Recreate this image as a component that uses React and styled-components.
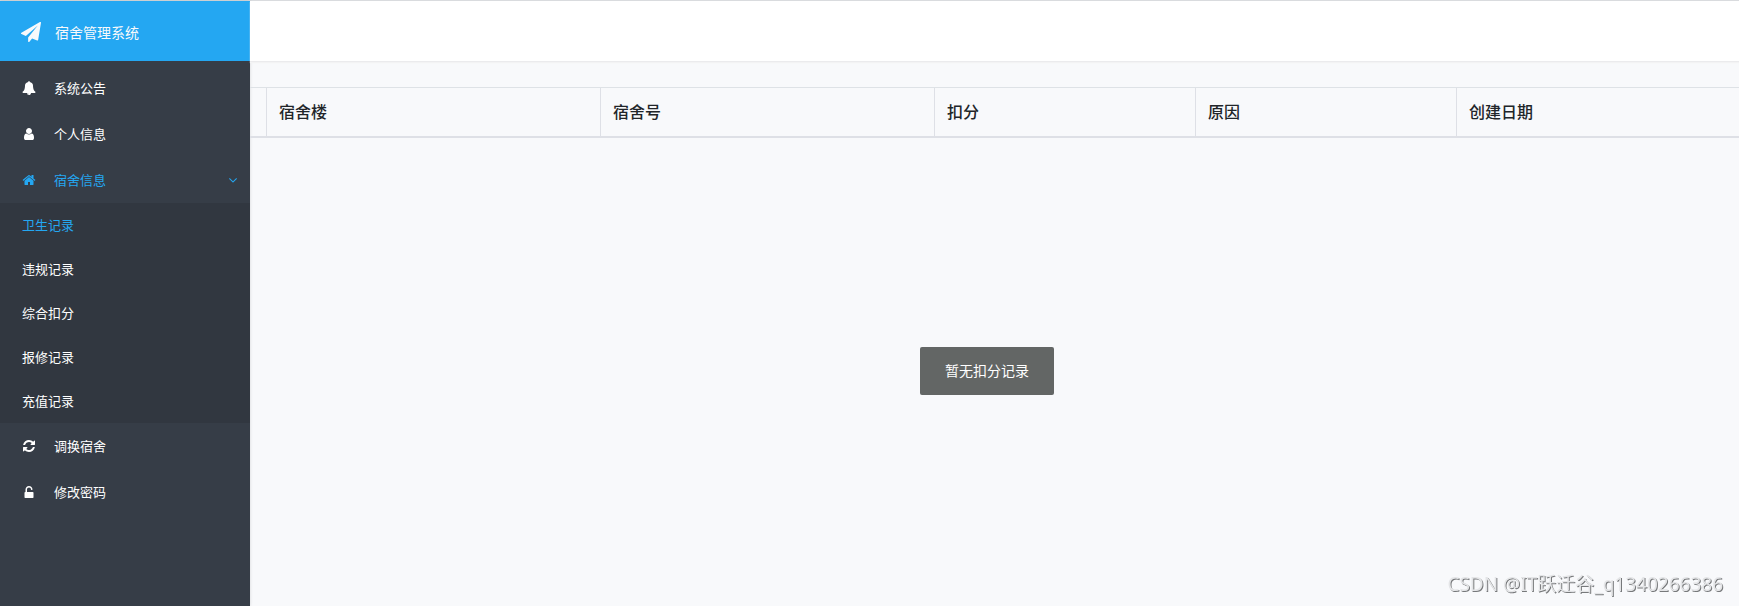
import styled, { createGlobalStyle } from "styled-components"

const GlobalStyle = createGlobalStyle`
  * {
    box-sizing: border-box;
  }
  body {
    margin: 0;
    background: #f8f9fb;
    color: #212529;
    font-family: "Noto Sans CJK SC", sans-serif;
  }
`
const Page = styled.div`
  display: flex;
  min-height: 100vh;
  border-top: 1px solid #d9dbde;
`
const Sidebar = styled.aside`
  flex: 0 0 250px;
  background: #363d47;
  box-shadow: 0 0 3px rgba(0, 0, 0, 0.15);
`
const Brand = styled.a`
  display: flex;
  align-items: center;
  gap: 14px;
  height: 60px;
  padding: 2px 21px 0;
  background: #24a7f2;
  color: #f8f9fb;
  font-size: 14px;
  line-height: 20px;
  text-decoration: none;
`
const Menu = styled.nav`
  padding-top: 4px;
`
const MenuItem = styled.a`
  display: flex;
  align-items: center;
  gap: 18px;
  height: 46px;
  padding: 0 10px 0 22px;
  color: ${({ $active }) => ($active ? "#24a7f2" : "#fff")};
  font-size: 13px;
  line-height: 20px;
  text-decoration: none;
`
const MenuLabel = styled.span`
  flex: 1;
`
const SubMenu = styled.div`
  background: #313740;
`
const SubItem = styled.a`
  display: flex;
  align-items: center;
  height: 44px;
  padding: 0 22px;
  color: ${({ $active }) => ($active ? "#24a7f2" : "#fff")};
  font-size: 13px;
  line-height: 20px;
  text-decoration: none;
`
const Glyph = styled.svg`
  flex: none;
  width: ${({ $size }) => $size}px;
  height: ${({ $size }) => $size}px;
  fill: currentColor;
`
const Content = styled.main`
  flex: 1;
  min-width: 0;
`
const TopBar = styled.header`
  height: 61px;
  background: #fff;
  border-bottom: 1px solid #ebebed;
  box-shadow: 0 1px 1px #f3f3f4;
`
const Records = styled.table`
  width: 100%;
  margin-top: 25px;
  border-spacing: 0;
  border-top: 1px solid #dee2e6;
  table-layout: fixed;
`
const HeadCell = styled.th`
  width: ${({ $width }) => $width};
  padding: 11px 12px 13px;
  border-left: 1px solid #dee0e6;
  border-bottom: 2px solid #dee0e6;
  font-size: 16px;
  font-weight: 500;
  line-height: 24px;
  text-align: left;
`
const EdgeCell = styled.td`
  width: 16px;
  padding: 0;
  border-bottom: 2px solid #dee0e6;
`
const ToastLayer = styled.div`
  position: fixed;
  inset: 136px 0 0 235px;
  display: flex;
  align-items: center;
  justify-content: center;
  pointer-events: none;
`
const Toast = styled.div`
  padding: 11px 25px 13px;
  border-radius: 2px;
  background: #636665;
  color: #fff;
  font-size: 14px;
  line-height: 24px;
`
const Watermark = styled.div`
  position: fixed;
  right: 16px;
  bottom: 8px;
  color: #e4e5e7;
  font-family: "Noto Sans", "Noto Sans CJK SC", sans-serif;
  font-size: 19px;
  line-height: 28px;
  text-shadow: 1px 1px 0 #77797b;
`

const icons = {
  plane: "M1764 11q33 24 27 64l-256 1536q-5 29-32 45-14 8-31 8-11 0-24-5l-453-185-242 295q-18 23-49 23-13 0-22-4-19-7-30.5-23.5t-11.5-36.5v-349l864-1059-1069 925-395-162q-37-14-40-55-2-40 32-59l1664-960q15-9 32-9 20 0 36 11z",
  bell: "M912 1696q0-16-16-16-59 0-101.5-42.5t-42.5-101.5q0-16-16-16t-16 16q0 73 51.5 124.5t124.5 51.5q16 0 16-16zm816-288q0 52-38 90t-90 38h-448q0 106-75 181t-181 75-181-75-75-181h-448q-52 0-90-38t-38-90q50-42 91-88t85-119.5 74.5-158.5 50-206 19.5-260q0-152 117-282.5t307-158.5q-8-19-8-39 0-40 28-68t68-28 68 28 28 68q0 20-8 39 190 28 307 158.5t117 282.5q0 139 19.5 260t50 206 74.5 158.5 85 119.5 91 88z",
  user: "M1536 1399q0 109-62.5 187t-150.5 78h-854q-88 0-150.5-78t-62.5-187q0-85 8.5-160.5t31.5-152 58.5-131 94-89 134.5-34.5q131 128 313 128t313-128q76 0 134.5 34.5t94 89 58.5 131 31.5 152 8.5 160.5zm-256-887q0 159-112.5 271.5t-271.5 112.5-271.5-112.5-112.5-271.5 112.5-271.5 271.5-112.5 271.5 112.5 112.5 271.5z",
  home: "M1472 992v480q0 26-19 45t-45 19h-384v-384h-256v384h-384q-26 0-45-19t-19-45v-480q0-1 .5-3t.5-3l575-474 575 474q1 2 1 6zm223-69l-62 74q-8 9-21 11h-3q-13 0-21-7l-692-577-692 577q-12 8-24 7-13-2-21-11l-62-74q-8-10-7-23.5t11-21.5l719-599q32-26 76-26t76 26l244 204v-195q0-14 9-23t23-9h192q14 0 23 9t9 23v408l219 182q10 8 11 21.5t-7 23.5z",
  refresh: "M1639 1056q0 5-1 7-64 268-268 434.5t-478 166.5q-146 0-282.5-55t-243.5-157l-129 129q-19 19-45 19t-45-19-19-45v-448q0-26 19-45t45-19h448q26 0 45 19t19 45-19 45l-137 137q71 66 161 102t187 36q134 0 250-65t186-179q11-17 53-117 8-23 30-23h192q13 0 22.5 9.5t9.5 22.5zm25-800v448q0 26-19 45t-45 19h-448q-26 0-45-19t-19-45 19-45l138-138q-148-137-349-137-134 0-250 65t-186 179q-11 17-53 117-8 23-30 23h-199q-13 0-22.5-9.5t-9.5-22.5v-7q65-268 270-434.5t480-166.5q146 0 284 55.5t245 156.5l130-129q19-19 45-19t45 19 19 45z",
  unlock: "M1376 896q40 0 68 28t28 68v576q0 40-28 68t-68 28h-960q-40 0-68-28t-28-68v-576q0-40 28-68t68-28h32v-320q0-185 131.5-316.5t316.5-131.5 316.5 131.5 131.5 316.5q0 26-19 45t-45 19h-64q-26 0-45-19t-19-45q0-106-75-181t-181-75-181 75-75 181v320h736z",
  down: "M1395 736q0 13-10 23l-466 466q-10 10-23 10t-23-10l-466-466q-10-10-10-23t10-23l50-50q10-10 23-10t23 10l393 393 393-393q10-10 23-10t23 10l50 50q10 10 10 23z",
}

const menu = [
  { icon: "bell", label: "系统公告" },
  { icon: "user", label: "个人信息" },
  {
    icon: "home",
    label: "宿舍信息",
    children: ["卫生记录", "违规记录", "综合扣分", "报修记录", "充值记录"],
  },
  { icon: "refresh", label: "调换宿舍" },
  { icon: "unlock", label: "修改密码" },
]

const columns = [
  { label: "宿舍楼", width: "22.43%" },
  { label: "宿舍号", width: "22.43%" },
  { label: "扣分", width: "17.53%" },
  { label: "原因", width: "17.53%" },
  { label: "创建日期", width: "auto" },
]

const Icon = ({ name, size = 14 }) => (
  <Glyph $size={size} viewBox="0 0 1792 1792" aria-hidden="true">
    <path d={icons[name]} />
  </Glyph>
)

const MenuEntry = ({ icon, label, children }) => (
  <>
    <MenuItem href="#" $active={Boolean(children)}>
      <Icon name={icon} />
      <MenuLabel>{label}</MenuLabel>
      {children && <Icon name="down" />}
    </MenuItem>
    {children && (
      <SubMenu>
        {children.map((child, i) => (
          <SubItem key={child} href="#" $active={i === 0}>{child}</SubItem>
        ))}
      </SubMenu>
    )}
  </>
)

const App = () => {
  return (
    <Page>
      <GlobalStyle />
      <Sidebar>
        <Brand href="#">
          <Icon name="plane" size={20} />
          宿舍管理系统
        </Brand>
        <Menu>
          {menu.map((item) => (
            <MenuEntry key={item.label} {...item} />
          ))}
        </Menu>
      </Sidebar>
      <Content>
        <TopBar />
        <Records>
          <thead>
            <tr>
              <EdgeCell />
              {columns.map(({ label, width }) => (
                <HeadCell key={label} scope="col" $width={width}>{label}</HeadCell>
              ))}
            </tr>
          </thead>
        </Records>
      </Content>
      <ToastLayer>
        <Toast role="status">暂无扣分记录</Toast>
      </ToastLayer>
      <Watermark>CSDN @IT跃迁谷_q1340266386</Watermark>
    </Page>
  )
}

export default App
